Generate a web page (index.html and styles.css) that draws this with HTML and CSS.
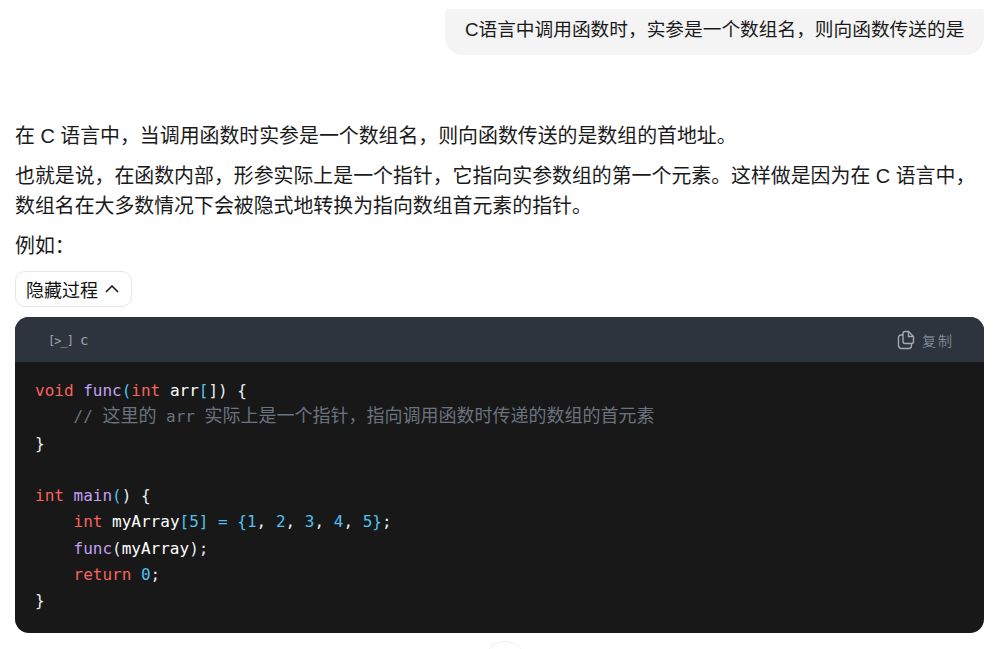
FILE: index.html
```html
<!DOCTYPE html>
<html lang="zh-CN">
<head>
    <meta charset="UTF-8">
    <title>C语言</title>
    <link rel="stylesheet" href="styles.css">
</head>
<body>
    <div class="user-row">
        <div class="bubble">C语言中调用函数时，实参是一个数组名，则向函数传送的是</div>
    </div>
    <div class="answer">
        <p>在 C 语言中，当调用函数时实参是一个数组名，则向函数传送的是数组的首地址。</p>
        <p>也就是说，在函数内部，形参实际上是一个指针，它指向实参数组的第一个元素。这样做是因为在 C 语言中，数组名在大多数情况下会被隐式地转换为指向数组首元素的指针。</p>
        <p>例如：</p>
        <button class="toggle">隐藏过程
            <svg class="chevron" width="16" height="16" viewBox="0 0 16 16"><path d="M2 11 L8 5 L14 11" fill="none" stroke="#111" stroke-width="1.5"/></svg>
        </button>
        <div class="code-box">
            <div class="code-head">
                <span class="lang"><span class="lang-icon">[&gt;_]</span>c</span>
                <span class="copy">
                    <svg width="18" height="20" viewBox="0 0 18 20" fill="none" stroke="#a3a9b2" stroke-width="1.4"><path d="M6 5 H4 A2.500 2.500 0 0 0 1.500 7.500 V15.500 A3 3 0 0 0 4.500 18.500 H11.500 A3 3 0 0 0 14.500 15.500 V13.500"/><path d="M6 3.500 A2 2 0 0 1 8 1.500 H11.500 L16.500 6.500 V11.500 A2 2 0 0 1 14.500 13.500 H8 A2 2 0 0 1 6 11.500 Z"/><path d="M11.500 1.500 V6.500 H16.500"/></svg>
                    <span class="copy-text">复制</span>
                </span>
            </div>
<pre class="code"><span class="kw">void</span> <span class="fn">func</span><span class="num">(</span><span class="kw">int</span> <span class="var">arr</span><span class="num">[</span><span class="pun">])</span> <span class="pun">{</span>
    <span class="cm">// <span class="zh">这里的</span> arr <span class="zh">实际上是一个指针，指向调用函数时传递的数组的首元素</span></span>
<span class="pun">}</span>

<span class="kw">int</span> <span class="fn">main</span><span class="num">(</span><span class="pun">)</span> <span class="pun">{</span>
    <span class="kw">int</span> <span class="var">myArray</span><span class="num">[5]</span> <span class="num">=</span> <span class="num">{1</span><span class="pun">,</span> <span class="num">2</span><span class="pun">,</span> <span class="num">3</span><span class="pun">,</span> <span class="num">4</span><span class="pun">,</span> <span class="num">5}</span><span class="pun">;</span>
    <span class="fn">func</span><span class="pun">(</span><span class="var">myArray</span><span class="pun">);</span>
    <span class="kw">return</span> <span class="num">0</span><span class="pun">;</span>
<span class="pun">}</span></pre>
        </div>
    </div>
    <div class="scroll-btn"></div>
</body>
</html>
```

FILE: styles.css
```css
html, body {
    height: 100%;
}
body {
    margin: 0;
    padding: 0 16px 0 15px;
    overflow: hidden;
    position: relative;
    background: #fff;
    color: #1a1a1a;
    font-family: "Liberation Sans", "Noto Sans CJK SC", sans-serif;
    font-size: 18px;
}
.user-row {
    display: flex;
    justify-content: flex-end;
    padding-top: 9px;
}
.bubble {
    background: #f4f4f4;
    border-radius: 4px 4px 18px 18px;
    padding: 6px 20px;
    font-size: 18.7px;
    line-height: 30px;
    height: 34px;
    width: 499px;
    white-space: nowrap;
}
.answer {
    padding-top: 66px;
}
.answer p {
    margin: 0 0 10px;
    font-size: 19.9px;
    line-height: 30px;
}
.toggle {
    display: flex;
    align-items: center;
    gap: 6px;
    height: 36px;
    padding: 0 11px 0 10px;
    border: 1px solid #e6e6e6;
    border-radius: 10px;
    background: #fff;
    color: #111;
    font: inherit;
}
.code-box {
    margin-top: 10px;
    background: #181818;
    border-radius: 14px;
    overflow: hidden;
}
.code-head {
    display: flex;
    justify-content: space-between;
    align-items: center;
    height: 45px;
    padding: 0 30px 0 33px;
    background: #2e343e;
    color: #9ca3af;
}
.lang {
    font-family: "DejaVu Sans Mono", monospace;
    font-size: 14px;
}
.lang-icon {
    font-size: 12px;
    letter-spacing: -1px;
    margin-right: 7px;
}
.copy {
    display: flex;
    align-items: center;
    gap: 7px;
}
.copy-text {
    font-size: 14px;
    font-weight: 300;
    letter-spacing: 2px;
}
.code {
    margin: 0;
    padding: 16px 20px 19px;
    font-family: "DejaVu Sans Mono", "Noto Sans CJK SC", monospace;
    font-size: 16px;
    line-height: 26.25px;
}
.zh {
    font-size: 18px;
    line-height: 1;
}
.kw { color: #f8635e; }
.fn { color: #c3a0f5; }
.var { color: #fff; }
.pun { color: #e6edf3; }
.num { color: #4fc1f0; }
.cm { color: #6a7380; }
.scroll-btn {
    position: absolute;
    left: 483px;
    top: 641px;
    width: 44px;
    height: 44px;
    box-sizing: border-box;
    border: 1px solid #efefef;
    border-radius: 50%;
    background: #fff;
}
```
